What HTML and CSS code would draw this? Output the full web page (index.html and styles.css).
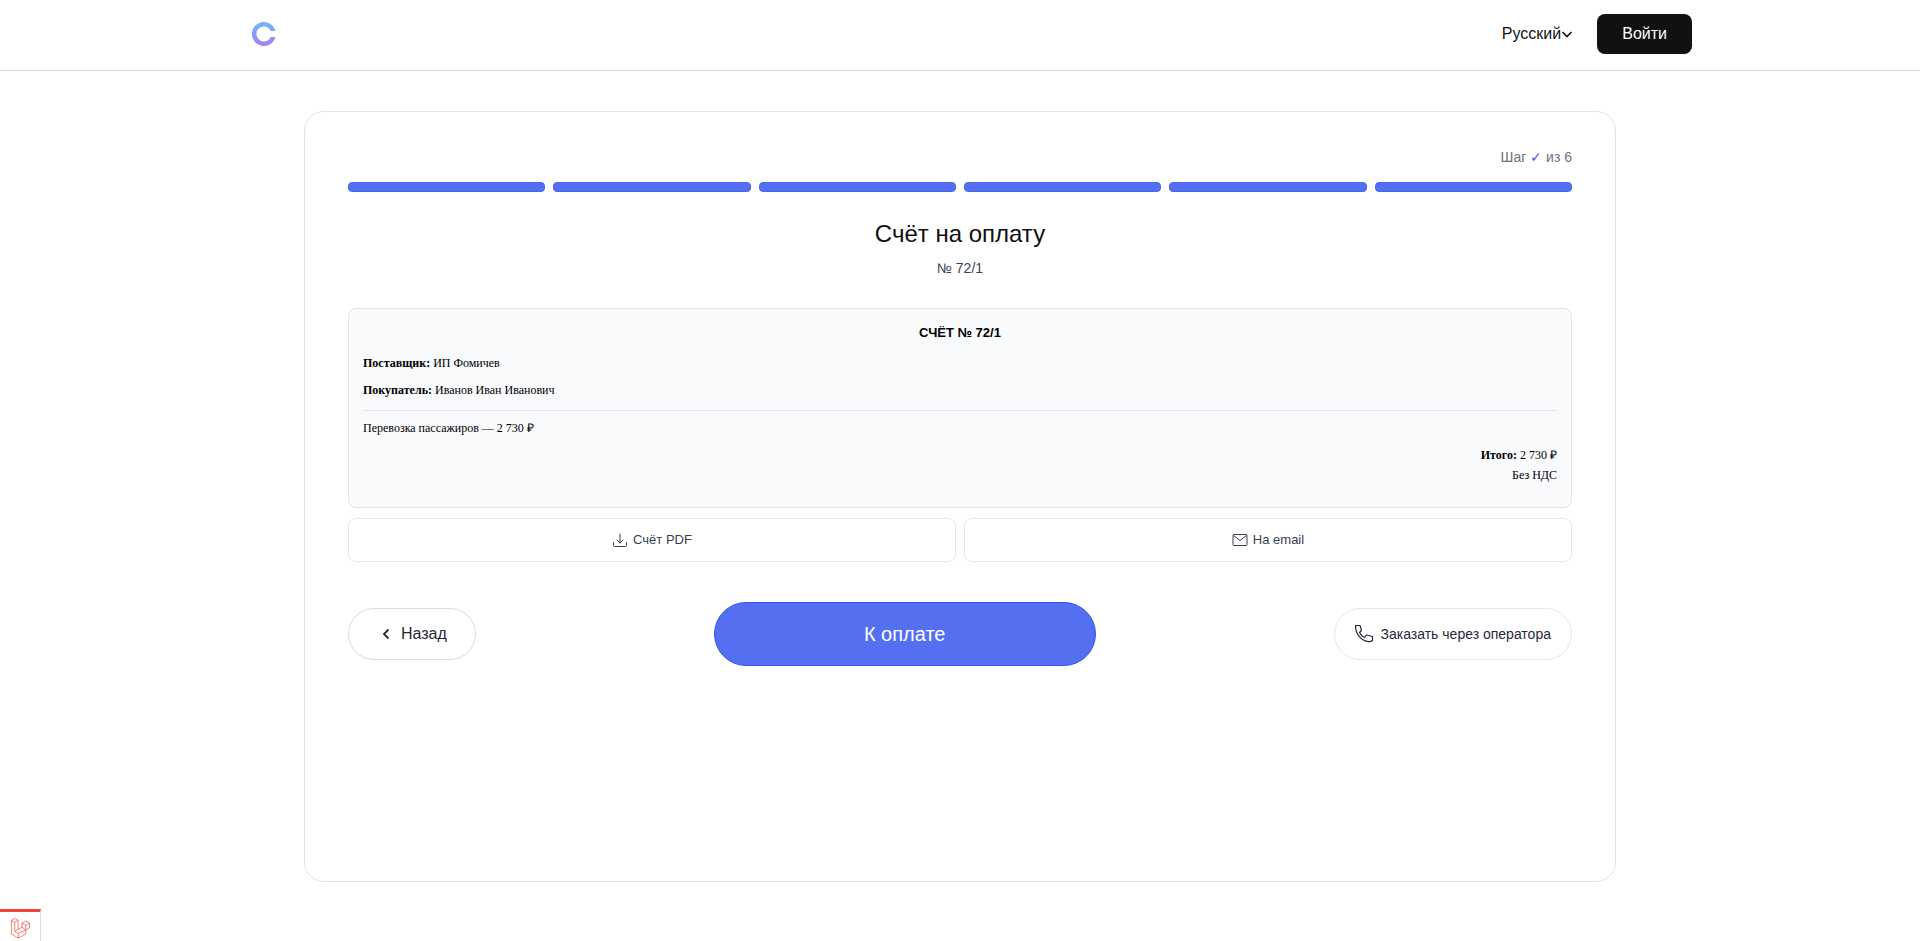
FILE: index.html
```
<!DOCTYPE html>
<html lang="ru">
<head>
  <meta charset="UTF-8">
  <meta name="viewport" content="width=device-width, initial-scale=1.0">
  <title>Счёт на оплату</title>
  <link rel="stylesheet" href="styles.css">
</head>
<body>

  <header class="header">
    <div class="header-inner">
      <a href="#" class="logo" aria-label="Главная">
        <svg width="24" height="24" viewBox="0 0 24 24" fill="none">
          <defs>
            <linearGradient id="logo-gradient" x1="0" y1="0" x2="0" y2="24" gradientUnits="userSpaceOnUse">
              <stop stop-color="#6db8f8"/>
              <stop offset="1" stop-color="#a67ff8"/>
            </linearGradient>
          </defs>
          <path d="M23.500 9A12 12 0 1 0 23.500 15H18.800A7.500 7.500 0 1 1 18.800 9Z" fill="url(#logo-gradient)"/>
        </svg>
      </a>
      <div class="header-actions">
        <button type="button" class="lang">Русский<svg width="12" height="12" viewBox="0 0 12 12" fill="none" stroke="currentColor" stroke-width="1.6"><path d="M1.5 4 6 8.5 10.5 4"/></svg></button>
        <button type="button" class="login">Войти</button>
      </div>
    </div>
  </header>

  <main class="card">
    <p class="step">Шаг <span class="step-done">✓</span> из 6</p>
    <div class="progress">
      <span></span><span></span><span></span><span></span><span></span><span></span>
    </div>

    <h1 class="title">Счёт на оплату</h1>
    <p class="subtitle">№ 72/1</p>

    <section class="invoice">
      <h2>СЧЁТ № 72/1</h2>
      <p><b>Поставщик:</b> ИП Фомичев</p>
      <p><b>Покупатель:</b> Иванов Иван Иванович</p>
      <hr>
      <p>Перевозка пассажиров — 2 730 ₽</p>
      <p class="total"><b>Итого:</b> 2 730 ₽<br>Без НДС</p>
    </section>

    <div class="documents">
      <button type="button">
        <svg width="16" height="16" viewBox="0 0 16 16" fill="none" stroke="currentColor" stroke-linecap="round" stroke-linejoin="round"><path d="M8 2v9M5 8l3 3 3-3M1.5 10.5v3a1 1 0 0 0 1 1h11a1 1 0 0 0 1-1v-3"/></svg>
        Счёт PDF
      </button>
      <button type="button">
        <svg width="16" height="16" viewBox="0 0 16 16" fill="none" stroke="currentColor" stroke-linejoin="round"><rect x="1" y="2.5" width="14" height="11" rx="1"/><path d="m1.5 3.5 6.5 5 6.5-5"/></svg>
        На email
      </button>
    </div>

    <div class="actions">
      <button type="button" class="back">
        <svg width="12" height="12" viewBox="0 0 12 12" fill="none" stroke="currentColor" stroke-width="1.8"><path d="M8.5 1.5 4 6l4.5 4.5"/></svg>
        Назад
      </button>
      <button type="button" class="pay">К оплате</button>
      <button type="button" class="operator">
        <svg width="20" height="20" viewBox="0 0 20 20" fill="none" stroke="currentColor" stroke-width="1.2" stroke-linejoin="round"><path d="M1.500 1.500h4.500l1.500 5-2 2c1.200 2.300 2.700 3.800 5 5l2-2.500 6 1.500v4c-1 1-2.500 1.300-4 1.200C7.500 17 1.500 10.500 1.500 1.500Z"/></svg>
        Заказать через оператора
      </button>
    </div>
  </main>

  <a href="#" class="debugbar" aria-label="Debugbar">
    <svg width="21" height="22" viewBox="0 0 22 23" fill="none" stroke="#f4433a" stroke-width="0.7" stroke-linejoin="round"><path d="M1.500 3.500 5 1.500l3.500 2v9.500l4-2.300V6.500l4-2.300 4 2.300v4.700l-4 2.300v4.500l-7.700 4-7.300-4ZM1.500 3.500l3.500 2 3.500-2M5 5.500V15l3.500-2M5 15l3.800 2.300M12.500 10.700l4 2.800M8.800 22v-4.700l7.700-3.800M12.500 6.500l4 2.300 4-2.300M16.500 8.800v4.700"/></svg>
  </a>

</body>
</html>
```
FILE: styles.css
```
* { box-sizing: border-box; margin: 0; padding: 0; }
body {
  font-family: "Liberation Sans", Arial, sans-serif;
  font-size: 14px;
  line-height: 20px;
  color: #111;
  background: #fff;
}
button {
  font: inherit;
  color: inherit;
  background: #fff;
  border: none;
  cursor: pointer;
  display: flex;
  align-items: center;
  justify-content: center;
}
svg { flex-shrink: 0; display: block; }

.header { border-bottom: 1px solid #d4d4d4; }
.header-inner {
  max-width: 1464px;
  margin: 0 auto;
  padding: 14px 0 16px 24px;
  display: flex;
  align-items: center;
  justify-content: space-between;
}
.header-actions {
  display: flex;
  align-items: center;
  gap: 24px;
  font-size: 16px;
}
.login {
  height: 40px;
  padding: 0 25px;
  border-radius: 8px;
  background: #111;
  color: #fff;
}

.card {
  max-width: 1312px;
  min-height: 771px;
  margin: 40px auto 59px;
  padding: 35px 43px;
  border: 1px solid #dfe2e8;
  border-radius: 20px;
}
.step { text-align: right; color: #6b7280; }
.step-done { color: #4355f5; }
.progress {
  display: flex;
  gap: 8px;
  margin-top: 15px;
}
.progress span {
  flex: 1;
  height: 10px;
  border: 1px solid #4767f0;
  border-radius: 4px;
  background: #5470f1;
}
.title {
  margin-top: 26px;
  font-size: 24px;
  font-weight: 400;
  line-height: 32px;
  text-align: center;
}
.subtitle {
  margin-top: 8px;
  text-align: center;
  color: #374151;
}

.invoice {
  margin-top: 30px;
  padding: 14px;
  border: 1px solid #e2e4e9;
  border-radius: 8px;
  background: #f8fafc;
  font-family: "Liberation Serif", "Times New Roman", serif;
  font-size: 12px;
  color: #000;
}
.invoice h2 {
  margin-bottom: 10px;
  font-family: "Liberation Sans", Arial, sans-serif;
  font-size: 13px;
  text-align: center;
}
.invoice p { margin-bottom: 7px; }
.invoice hr {
  margin: 10px 0 7px;
  border: none;
  border-top: 1px solid #e2e4e9;
}
.invoice .total {
  margin-bottom: 8px;
  text-align: right;
}

.documents {
  display: flex;
  gap: 8px;
  margin-top: 10px;
}
.documents button {
  flex: 1;
  height: 44px;
  gap: 5px;
  border: 1px solid #e5e7eb;
  border-radius: 8px;
  font-size: 13px;
  color: #374151;
}

.actions {
  display: flex;
  align-items: center;
  justify-content: space-between;
  margin-top: 40px;
}
.back, .operator {
  height: 52px;
  border: 1px solid #e5e7eb;
  border-radius: 26px;
  color: #1f2937;
}
.back {
  gap: 9px;
  padding: 0 28px 0 31px;
  border-color: #d5dbe3;
  font-size: 16px;
}
.operator {
  gap: 7px;
  padding: 0 20px 0 19px;
}
.pay {
  width: 382px;
  height: 64px;
  border: 1px solid #2f55e8;
  border-radius: 32px;
  background: #5470f1;
  color: #fff;
  font-size: 20px;
}

/* pinned to the window corner, over the page */
.debugbar {
  position: fixed;
  left: 0;
  bottom: 0;
  padding: 5px 9px 2px 10px;
  border-top: 3px solid #f4433a;
  border-right: 1px solid #ddd;
  background: #fff;
}
```
